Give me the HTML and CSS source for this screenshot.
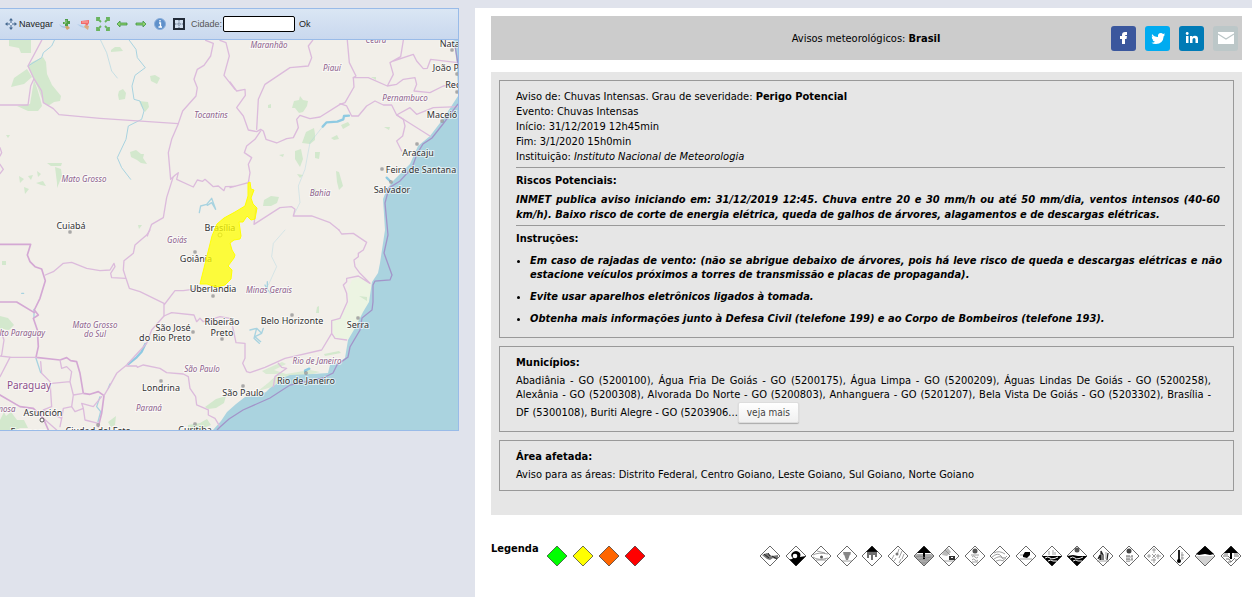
FILE: index.html
```html
<!DOCTYPE html>
<html lang="pt-BR">
<head>
<meta charset="utf-8">
<title>Avisos meteorológicos: Brasil</title>
<link rel="stylesheet" href="styles.css">
</head>
<body>
<div class="page">
  <section class="map-panel" aria-label="Mapa">
    <div class="toolbar">
      <button class="tool" type="button">
        <svg width="12" height="12" viewBox="0 0 12 12"><path d="M6 1v10M1 6h10" stroke="#46698f" stroke-width="1"/><path d="M6 0l2 2.500H4zM6 12l2-2.500H4zM0 6l2.500-2v4zM12 6L9.500 4v4z" fill="#46698f"/><rect x="5" y="5" width="2" height="2" fill="#dfe8f6"/></svg>
        <span>Navegar</span>
      </button>
      <button class="tool" type="button" aria-label="Aproximar">
        <svg width="14" height="14" viewBox="0 0 14 14"><path d="M1 7q3 3 7 2l-1 2q-4 0-6-4z" fill="#a9c6e6"/><path d="M9 8l3 3-3 2-2-3z" fill="#d3a56b"/><path d="M7 2h3v2h2v3h-2v2H7V7H5V5h2z" fill="#4f9f48"/><path d="M8 3v3H6" stroke="#9bd08c" fill="none"/></svg>
      </button>
      <button class="tool" type="button" aria-label="Afastar">
        <svg width="14" height="14" viewBox="0 0 14 14"><path d="M0 7q4 1 6 2l2 2q-4 0-8-4z" fill="#b3cdea"/><path d="M8 8l4 1-1 4-4-3z" fill="#dcab7c"/><path d="M4 4l8-1v3l-2 3-2-2-4 0z" fill="#f0696a"/><path d="M5 5h6" stroke="#ffb1aa"/></svg>
      </button>
      <button class="tool" type="button" aria-label="Extensão máxima">
        <svg width="14" height="14" viewBox="0 0 14 14"><path d="M1 4V1h3M10 1h3v3M13 10v3h-3M4 13H1v-3M1 1l4 4M13 1L9 5M13 13L9 9M1 13l4-4" stroke="#69b45f" stroke-width="1.800" fill="none"/></svg>
      </button>
      <button class="tool" type="button" aria-label="Anterior">
        <svg width="14" height="14" viewBox="0 0 14 14"><path d="M2 7l3-3v2h7v2H5v2z" fill="#8ed06e" stroke="#3f9645" stroke-width=".8"/></svg>
      </button>
      <button class="tool" type="button" aria-label="Próximo">
        <svg width="14" height="14" viewBox="0 0 14 14"><path d="M12 7L9 4v2H2v2h7v2z" fill="#8ed06e" stroke="#3f9645" stroke-width=".8"/></svg>
      </button>
      <button class="tool" type="button" aria-label="Informação">
        <svg width="14" height="14" viewBox="0 0 14 14"><circle cx="7" cy="7" r="5.500" fill="#5f90ca" stroke="#8aaedb"/><path d="M6 6h1.500v4M5.500 10H9M7 3v1.500" stroke="#fff" stroke-width="1.300" fill="none"/></svg>
      </button>
      <button class="tool" type="button" aria-label="Grade">
        <svg width="14" height="14" viewBox="0 0 14 14"><rect x="2" y="2" width="10" height="10" fill="#d3e0f0" stroke="#222b38" stroke-width="2"/><path d="M7 3v8M3 7h8" stroke="#64748c" stroke-dasharray="1.500 .8"/></svg>
      </button>
      <label class="city-label" for="city">Cidade:</label>
      <input class="city-input" id="city" type="text">
      <button class="tool" type="button">Ok</button>
    </div>
    <svg class="map" viewBox="0 40 458 390" role="img" aria-label="Mapa do Brasil com área de aviso">
      <rect x="0" y="40" width="458" height="390" fill="#f2efe9"/>
      <!-- Vegetation -->
      <g fill="#d3e8cd">
        <path d="M9 40h22v13h-10l-2-5-10-2zM28 66l4-4 11-5 3 5 1 12 5 11 9 11-1 5-6 1-6 4-5-4-5-14-5-10z"/>
        <path d="M11 87l3-9 13-9 5 8-8 7zM34 80l3 8 3 10 2 8-4 5-10 0-11-5 13-2z"/>
        <path d="M111 50l4-3 5 0 3 4-12 1zM150 76l5-1 5 3-3 6-6-3zM119 91l4-2 3 4-1 6-6 1-1-5zM139 101l9 1 1 5-4 5-4-6zM130 152l6-2 5 4 3 0-1 4 4 6-6-1-4-3-6-3z"/>
        <path d="M47 163l15 0-1 3-10 0zM19 176l5 3-4 4zM37 171l4 3-3 3zM55 167l6 2 1 7-5 12 0-5zM36 183l7-2 3 5-5-1zM24 187l5 2-4 5zM28 176l5-1-2 5zM138 225l4 0-3 4zM6 135l4 0-2 3z"/>
        <path d="M294 101l5-1 1-4 3 4 5 1-1 5-4 6-4 1-4-5-3 0zM306 132l8-4 1 6 0 6-5 4-8-1zM295 151l6-2 2 10-3 8-5-8zM331 138l6-3 2 4-5 1zM341 125l7-3 2 3-7 4zM336 171l3 1 4 14-4 4-2-8zM315 152l5 0-1 7-4-1zM264 200l7-4 8 1-2 6-6 3-8 0zM312 190l3-2 3 6-4 3zM384 127l6 0-1 3zM279 155l5-1-1 3zM268 105l3-1 0 4-3 0zM297 174l6 1-3 3zM371 77l5 0 0 3z"/>
        <path d="M0 316l8 2 6 7-5 5-9-1zM2 261l4 0 0 4-4 0zM108 422l8-6-1 9-4 2zM0 420l4-8 2 4 5-4 6 8 7 0 4 8-8 0-4 2-16 0zM205 407l11-8 10-3-2 7-8 5-8 1zM188 425l12-2 7-4 4 6-12 5-11 0z"/>
        <path d="M352 280l10-3 9 6 0 20-9 18-14 18-14 0-3-18 10-4 8-15-1-12z" fill="#ecf4e2"/>
        <path d="M262 371l20-9 4 2-12 6 12 4 24-4 10 2-18 5-16 0-14 10-14 4 10-8 10-9-12 0z" opacity=".8"/>
        <path d="M317 307l2-1 0 7-3 0zM324 354l15-3 2 2-16 3zM359 296l8 1 0 4z"/>
      </g>
      <!-- Ocean -->
      <path d="M453 40L455 49L457 66L458 96L443 119L430 136L418 146L410 164L393 181L387 189L383 199L385 230L380 263L378 273L372 282L369 302L363 312L355 328L348 340L345 358L338 363L330 365L328 373L313 374L290 375L283 378L278 383L270 388L266 392L258 395L245 397L236 404L227 412L221 421L213 430H458V40z" fill="#aad3df"/>
      <g class="river">
        <g transform="translate(0 36) scale(.3333)">
          <path d="M163 13L155 30L130 50L125 65L84 90M388 13L408 40L412 65L436 95L405 118L396 150L402 190L420 195L432 225L425 250L385 270L378 310L352 365L365 395L392 430"/>
          <path d="M302 13L320 50L335 105L352 126" opacity=".6"/>
          <path class="wide" d="M598 530L602 510L620 505L635 487L647 520L635 500L622 508"/>
        </g>
        <g transform="translate(230 36) scale(.3333)">
          <path class="lake" d="M278 272L290 259L322 257L340 250L342 240L357 239"/>
          <path d="M278 272L240 320L225 400L205 450L210 500L190 540" opacity=".4"/>
          <path class="lake" d="M470 425L480 435"/>
        </g>
        <g transform="translate(0 230) scale(.3333)">
          <path class="lake" d="M436 342L425 365L410 382L385 402"/>
          <path class="wide" d="M108 385L122 428M330 462L325 475M300 500L290 530L302 545L294 575M102 238V262M65 190h6"/>
        </g>
        <g transform="translate(230 230) scale(.3333)">
          <path class="wide" d="M60 300L80 295L95 310L75 320L92 335M80 295L72 325L88 340M95 310L100 295M105 165L112 178L122 190M112 178V155"/>
          <path class="lake" d="M238 416L225 422L228 430"/>
          <path d="M165 0L130 40L125 80L140 110L115 165" opacity=".4"/>
        </g>
      </g>
      <!-- Borders -->
      <g class="border">
        <g transform="translate(0 36) scale(.3333)">
          <path d="M125 13L84 90L102 128L125 165L130 200L160 218L177 236L300 247L535 263M0 207H84L92 150L102 128"/>
          <path d="M617 13L640 22L632 60L612 88L592 100L582 130L592 155L588 180L548 225L535 263L515 310L505 350L512 430L525 418L535 410L530 430L580 453L592 432L608 436L615 430L640 452L655 450L672 464L676 452L705 451"/>
          <path d="M660 13L678 20L688 60L672 118L705 160M519 425L500 485L490 545L455 565L442 600M0 335L5 350L0 360M0 385L10 400L0 413"/>
        </g>
        <g transform="translate(230 36) scale(.3333)">
          <path d="M0 138L20 165L45 160L46 178L20 215L40 240L55 282L80 287L92 280L100 285L108 310L140 321L170 308L190 305L205 275L200 250L210 238L240 248L270 243L330 205L345 200L372 153L370 125L378 120L358 80L352 13"/>
          <path d="M248 13L235 30L245 65L235 90L180 95L105 145L85 190L80 280M330 203L350 210L365 240L385 240L410 210L435 195L460 207L485 207L500 237L600 300"/>
          <path d="M370 125L415 125L472 150L490 115L480 80L512 62L520 13M472 150L500 145L520 130L555 125L560 145L552 165L600 170L640 150L680 145M490 75L550 55L560 75L580 98L592 97L602 70L685 80"/>
          <path d="M500 237L540 215L560 235L610 215L685 212M500 237L520 250L525 270L518 300L500 315L515 345M92 285L75 310L50 330L43 350L65 365L55 385L60 410L55 440L0 455M78 517L72 565L150 515L185 512L195 520L190 540L245 540L300 560L327 582"/>
        </g>
        <g transform="translate(0 230) scale(.3333)">
          <path class="national" d="M0 43H92L82 75L90 95L105 110L125 117L136 152L120 205L103 240L115 255L100 265L112 300L115 350L108 382L180 390L200 383L212 392L230 395L240 430L250 490L270 493L295 485L312 497L305 550L295 590M0 216H50L103 248M0 495L60 530L100 535L130 565L145 600"/>
          <path d="M136 135L160 125L190 100L215 97L260 115L300 122L330 120L342 100L345 110L332 130L335 143L378 145L388 175L420 185L492 220L492 258L455 300L440 340L380 405L350 430L328 470L312 497M450 0L440 15L405 45L400 70L372 92L370 120L378 145M492 225L525 182L550 182L600 175"/>
          <path d="M492 258L515 248L582 255L590 275L600 265L610 275L660 260L690 265M380 408L410 408L412 412L430 405L480 415L500 428L550 432L565 440L570 475L587 500L590 525L625 540L625 555L645 565L660 590"/>
          <path d="M5 375L12 330L5 310M0 378L35 382L110 382M122 395L125 430L150 455L155 530M180 390L185 415L200 410L215 425L210 455L155 460M210 455L220 495L250 490M30 382L0 440M155 530L130 540L185 565L190 535L215 530L225 545L250 535L245 520L280 530L305 500M220 495L215 530M185 565L180 590M250 535L255 570L295 580M130 565L170 600"/>
        </g>
        <g transform="translate(230 230) scale(.3333)">
          <path d="M327 0L335 12L370 10L410 37L400 60L385 70L385 80L372 90L375 110L390 130L420 160L385 138L350 145L350 155L340 165L350 190L352 215L330 265L305 272L305 310L275 360L165 385L105 412L60 428L50 425L38 400L45 385L45 340L18 338L8 290M305 310L315 325L350 330M145 400L155 412L170 415L135 440L130 470"/>
        </g>
      </g>
      <path d="M455 46L458 64M458 104L443 124L432 138L423 144L417 154L412 168L400 181L389 188L385 203L388 235L384 253L392 275L390 280L375 281L373 285L373 302L372 310L362 318L360 330L350 347L348 357L337 365L333 373L323 378L290 385L270 398L243 410L229 419L220 427L217 430" fill="none" stroke="#a294c9" stroke-width="1.300"/>
      <!-- City markers -->
      <g fill="#fff" stroke="#777" stroke-width=".8">
        <rect x="451" y="49" width="2" height="2"/><rect x="456" y="73" width="2" height="2"/><rect x="456" y="91" width="2" height="2"/><rect x="441" y="120" width="2" height="2"/><rect x="416" y="143" width="2" height="2"/><rect x="381" y="168" width="2" height="2"/><rect x="390" y="181" width="2" height="2"/><rect x="69" y="231" width="2" height="2"/><circle cx="220" cy="235" r="2"/><rect x="194" y="251" width="2" height="2"/><rect x="212" y="295" width="2" height="2"/><rect x="192" y="331" width="2" height="2"/><rect x="221" y="338" width="2" height="2"/><rect x="291" y="314" width="2" height="2"/><rect x="357" y="317" width="2" height="2"/><rect x="305" y="372" width="2" height="2"/><rect x="242" y="385" width="2" height="2"/><rect x="160" y="380" width="2" height="2"/><circle cx="42" cy="420" r="2" stroke="#333"/><rect x="194" y="423" width="2" height="2"/><rect x="97" y="424" width="2" height="2"/>
      </g>
      <g class="state">
        <text x="269" y="48">Maranhão</text><text x="332" y="71">Piauí</text><text x="376" y="43">Ceará</text><text x="405" y="101">Pernambuco</text><text x="211" y="118">Tocantins</text><text x="84" y="182">Mato Grosso</text><text x="320" y="196">Bahia</text><text x="177" y="243">Goiás</text><text x="269" y="293">Minas Gerais</text><text x="95" y="328">Mato Grosso</text><text x="95" y="337">do Sul</text><text x="20" y="336">Alto Paraguay</text><text x="202" y="372">São Paulo</text><text x="149" y="411">Paraná</text><text x="317" y="364">Rio de Janeiro</text><text x="0" y="412">Formosa</text>
      </g>
      <text class="country" x="29" y="389">Paraguay</text>
      <g class="city">
        <text x="451" y="47">Natal</text><text x="458" y="71">João Pessoa</text><text x="458" y="88">Recife</text><text x="442" y="118">Maceió</text><text x="418" y="156">Aracaju</text><text x="421" y="173">Feira de Santana</text><text x="392" y="193">Salvador</text><text x="71" y="229">Cuiabá</text><text x="220" y="231">Brasília</text><text x="196" y="262">Goiânia</text><text x="213" y="292">Uberlândia</text><text x="173" y="331">São José</text><text x="165" y="341">do Rio Preto</text><text x="222" y="325">Ribeirão</text><text x="222" y="336">Preto</text><text x="292" y="324">Belo Horizonte</text><text x="358" y="328">Serra</text><text x="306" y="384">Rio de Janeiro</text><text x="243" y="396">São Paulo</text><text x="161" y="391">Londrina</text><text x="43" y="416">Asunción</text><text x="195" y="433">Curitiba</text><text x="98" y="434">Ciudad del Este</text><text x="29" y="435">Formosa</text>
      </g>
      <!-- Warning area -->
      <path d="M248 183L250 182L251 189L254 190L251 198L253 204L257 208L255 219L251 220L247 216L243 222L239 222L241 236L240 239L234 240L230 243L232 250L235 255L234 258L228 266L232 270L231 279L228 282L225 285L216 287L207 284L200 284L212 236L217 224L224 218L235 212L245 206L248 196z" fill="#ff0" fill-opacity=".75" stroke="#ff0"/>
    </svg>
  </section>

  <main class="content">
    <header class="title-bar">
      <h1 class="title">Avisos meteorológicos: <b>Brasil</b></h1>
      <nav class="share">
        <a class="share-link facebook" href="#" aria-label="Facebook"><svg viewBox="0 0 25 25"><path d="M11 18v-5H9v-3h2V9q0-3 3-3h2v3h-1q-1 0-1 1h2l-.500 3H14v5z" fill="#fff"/></svg></a>
        <a class="share-link twitter" href="#" aria-label="Twitter"><svg viewBox="0 0 25 25"><path d="M7 8q2 3 6 3-.500-4 3-4 1 0 2 1l2-.500-1 1.500 1-.200-1.300 1.500Q18 18 11 18q-3 0-4.500-1.200 2.300 0 3.500-1.100-2-.500-2.500-2l1 0Q6.700 13 6.700 10.500l1.200.3Q6.300 9.500 7 8z" fill="#fff"/></svg></a>
        <a class="share-link linkedin" href="#" aria-label="LinkedIn"><svg viewBox="0 0 25 25"><path d="M7 10h2.500v7H7zM11 10h2.300v1q1-1.200 2.700-1.200 3 0 3 3.200v4h-2.500v-3.500q0-1.500-1.400-1.500-1.600 0-1.600 1.700V17H11z" fill="#fff"/><circle cx="8.200" cy="7.500" r="1.400" fill="#fff"/></svg></a>
        <a class="share-link email" href="#" aria-label="E-mail"><svg viewBox="0 0 25 25"><rect x="5" y="6" width="16" height="12" fill="#fff"/><path d="M5 8l8 5 8-5" fill="none" stroke="#bcc7c8" stroke-width="1.200"/></svg></a>
      </nav>
    </header>

    <div class="notice">
      <section class="card">
        <p class="facts">Aviso de: Chuvas Intensas. Grau de severidade: <b>Perigo Potencial</b><br>Evento: Chuvas Intensas<br>Início: 31/12/2019 12h45min<br>Fim: 3/1/2020 15h0min<br>Instituição: <i>Instituto Nacional de Meteorologia</i></p>
        <div class="risks">
          <h2 class="heading">Riscos Potenciais:</h2>
          <p class="strong-text">INMET publica aviso iniciando em: 31/12/2019 12:45. Chuva entre 20 e 30 mm/h ou até 50 mm/dia, ventos intensos (40-60 km/h). Baixo risco de corte de energia elétrica, queda de galhos de árvores, alagamentos e de descargas elétricas.</p>
        </div>
        <h2 class="heading">Instruções:</h2>
        <ul class="tips">
          <li>Em caso de rajadas de vento: (não se abrigue debaixo de árvores, pois há leve risco de queda e descargas elétricas e não estacione veículos próximos a torres de transmissão e placas de propaganda).</li>
          <li>Evite usar aparelhos eletrônicos ligados à tomada.</li>
          <li>Obtenha mais informações junto à Defesa Civil (telefone 199) e ao Corpo de Bombeiros (telefone 193).</li>
        </ul>
      </section>
      <section class="card">
        <h2 class="heading">Municípios:</h2>
        <p class="towns">Abadiânia - GO (5200100), Água Fria De Goiás - GO (5200175), Água Limpa - GO (5200209), Águas Lindas De Goiás - GO (5200258), Alexânia - GO (5200308), Alvorada Do Norte - GO (5200803), Anhanguera - GO (5201207), Bela Vista De Goiás - GO (5203302), Brasília - DF (5300108), Buriti Alegre - GO (5203906...<button class="more" type="button">veja mais</button></p>
      </section>
      <section class="card">
        <h2 class="heading">Área afetada:</h2>
        <p class="areas">Aviso para as áreas: Distrito Federal, Centro Goiano, Leste Goiano, Sul Goiano, Norte Goiano</p>
      </section>
    </div>

    <footer class="legend">
      <b class="legend-title">Legenda</b>
      <div class="levels">
        <svg class="sign" viewBox="0 0 22 22"><path class="level" d="M11 1l10 10-10 10L1 11z" fill="#0f0"/></svg>
        <svg class="sign" viewBox="0 0 22 22"><path class="level" d="M11 1l10 10-10 10L1 11z" fill="#ff0"/></svg>
        <svg class="sign" viewBox="0 0 22 22"><path class="level" d="M11 1l10 10-10 10L1 11z" fill="#f60"/></svg>
        <svg class="sign" viewBox="0 0 22 22"><path class="level" d="M11 1l10 10-10 10L1 11z" fill="#f00"/></svg>
      </div>
      <div class="events">
        <svg class="sign" viewBox="0 0 22 22"><path class="frame" d="M11 1l10 10-10 10L1 11z"/><path d="M3 10l5-2 5 3 6-1 0 3-3 1-2-1-3 2-3-1z" fill="#777"/><path d="M5 9l5 4M13 11l5 3M9 8l2 3" stroke="#222"/></svg>
        <svg class="sign" viewBox="0 0 22 22"><path class="frame" d="M11 1l10 10-10 10L1 11z"/><path d="M21 11L11 21l-7-7q3 1 4-1-3-2-1-5 4-4 8 0 1 2 0 4z"/><circle cx="10" cy="11" r="2.300" fill="#fff"/></svg>
        <svg class="sign" viewBox="0 0 22 22"><path class="frame" d="M11 1l10 10-10 10L1 11z"/><path class="fine" d="M3 10q5-3 15-1M3 12q5 4 15 1M6 15h10M7 6l8 2"/><circle cx="11.500" cy="12" r="1.500" fill="#555"/></svg>
        <svg class="sign" viewBox="0 0 22 22"><path class="frame" d="M11 1l10 10-10 10L1 11z"/><path d="M7 7h8l-2 5-1 3h-2l-1-3z" fill="#888"/><path class="fine" d="M6 16h10M7 9h8M9 12h4"/></svg>
        <svg class="sign" viewBox="0 0 22 22"><path class="frame" d="M11 1l10 10-10 10L1 11z"/><path d="M11 1l6 6H5z"/><path d="M7 6v7M11 6v9M15 6v6M9 6v4M13 6v4" stroke="#222" stroke-width="1.300"/></svg>
        <svg class="sign" viewBox="0 0 22 22"><path class="frame" d="M11 1l10 10-10 10L1 11z"/><path class="fine" d="M12 4l-2 6M15 6l-3 7M7 10l-2 4M9 13l-2 3M14 14l-2 4M17 9l-2 5"/><circle cx="10" cy="9" r="1.500" fill="#777"/></svg>
        <svg class="sign" viewBox="0 0 22 22"><path d="M4 9h14l3 2-10 10L1 11z" fill="#aaa"/><path class="frame" d="M11 1l10 10-10 10L1 11z"/><path d="M11 1l7 7H4z"/><path d="M11 7v7" stroke="#000" stroke-width="2"/><path class="fine" d="M3 12q4-2 7 0t8 0M5 15q4-2 7 0h4M8 18h6"/></svg>
        <svg class="sign" viewBox="0 0 22 22"><path class="frame" d="M11 1l10 10-10 10L1 11z"/><path d="M5 7l5-4 3 4-4 4-5-1z" fill="#bbb"/><path d="M11 11h6v4h-6z" fill="#333"/><path d="M13 12h2v1h-2z" fill="#fff"/><path class="fine" d="M6 16h10M7 5l5 5"/></svg>
        <svg class="sign" viewBox="0 0 22 22"><path class="frame" d="M11 1l10 10-10 10L1 11z"/><circle cx="11" cy="6" r="2.500" fill="#555"/><path class="fine" d="M7 10h8M8 12q1.500-2 3 0t3 0M8 15q1.500-2 3 0t3 0M8 17h6"/></svg>
        <svg class="sign" viewBox="0 0 22 22"><path class="frame" d="M11 1l10 10-10 10L1 11z"/><path class="fine" d="M5 8q5-3 11 1M3 12q6-5 9-1t6 0M5 14q6-4 8-1t4 0M7 16q4-2 8 0"/></svg>
        <svg class="sign" viewBox="0 0 22 22"><path class="frame" d="M11 1l10 10-10 10L1 11z"/><path d="M8 10l2-3 5 0 0 3-3 3-4-1z"/><path class="fine" d="M5 14h12M5 10h3"/></svg>
        <svg class="sign" viewBox="0 0 22 22"><path class="frame" d="M11 1l10 10-10 10L1 11z"/><path d="M1 11h20L11 21z"/><path d="M4 13q3-2 5 0t8-1M7 16q3-2 5 0h4" stroke="#fff" fill="none"/><path class="fine" d="M8 6v4M12 5v5M14 7v3"/></svg>
        <svg class="sign" viewBox="0 0 22 22"><path class="frame" d="M11 1l10 10-10 10L1 11z"/><circle cx="11" cy="5" r="2.500" fill="#555"/><path d="M1 11l6-1 5 1 9 0-10 10z"/><path d="M4 13q3-2 5 0t8-1M7 16q3-2 5 0h4" stroke="#eee" fill="none"/></svg>
        <svg class="sign" viewBox="0 0 22 22"><path class="frame" d="M11 1l10 10-10 10L1 11z"/><path d="M6 14l2-4v5M9 15V6l2 4v5M15 15l1-7" stroke="#222" stroke-width="1.200" fill="none"/><path class="fine" d="M5 16h12M14 7v7"/></svg>
        <svg class="sign" viewBox="0 0 22 22"><path class="frame" d="M11 1l10 10-10 10L1 11z"/><circle cx="11" cy="6" r="2.500" fill="#444"/><path d="M9 10v7M11 10v7M14 10v6" stroke="#888" stroke-width="1.300" stroke-dasharray="2 1"/><path class="fine" d="M8 12h7M8 15h7"/></svg>
        <svg class="sign" viewBox="0 0 22 22"><path class="frame" d="M11 1l10 10-10 10L1 11z"/><path class="fine" d="M11 3v5M9 5h4M6 9v4M4 11h4M15 9v5M13 11h5M11 13v5M8 15h5M9 9l4 4M13 9l-4 4"/></svg>
        <svg class="sign" viewBox="0 0 22 22"><path class="frame" d="M11 1l10 10-10 10L1 11z"/><path d="M10 5v11" stroke="#222" stroke-width="2"/><circle cx="10" cy="16" r="2"/><path class="fine" d="M13 7v8M12 10h3M12 13h3"/></svg>
        <svg class="sign" viewBox="0 0 22 22"><path d="M1 11h20L11 21z" fill="#d2d2d2"/><path class="frame" d="M11 1l10 10-10 10L1 11z"/><path d="M11 1l9 8-4 1-5-1-6 1-3-1z"/></svg>
        <svg class="sign" viewBox="0 0 22 22"><path class="frame" d="M11 1l10 10-10 10L1 11z"/><path d="M11 1l7 7H4z"/><path d="M11 6v8" stroke="#000" stroke-width="2"/><path d="M3 11h5l2 2M14 11h5M6 14h3l2 3 4-4M8 17h3M4 9h4M14 9h4M15 15h2" stroke="#777" fill="none"/></svg>
      </div>
    </footer>
  </main>
</div>
</body>
</html>
```
FILE: styles.css
```css
* { box-sizing: border-box; }
body {
  margin: 0;
  background: #e0e3ec;
  color: #000;
  font: 11px/15px "DejaVu Sans Condensed", "DejaVu Sans", sans-serif;
}
h1, h2, p, ul { margin: 0; }
svg { display: block; }
button { font: inherit; color: inherit; }

.page {
  display: grid;
  grid-template-columns: minmax(0, 475fr) minmax(0, 777fr);
  min-height: 100vh;
  padding-top: 8px;
}

/* Map */
.map-panel {
  align-self: start;
  margin-right: 16px;
  border: 1px solid #99bbe8;
  border-left: 0;
}
.toolbar {
  display: flex;
  align-items: center;
  height: 31px;
  padding-left: 5px;
  gap: 5px;
  border-bottom: 1px solid #99bbe8;
  background: linear-gradient(#dae6f4, #c9d8ee);
  font: 9px/14px "Liberation Sans", Arial, sans-serif;
  color: #222;
}
.tool {
  display: flex;
  align-items: center;
  gap: 2px;
  padding: 0;
  border: 0;
  background: none;
}
.city-label { color: #555; }
.city-input {
  width: 72px;
  height: 16px;
  margin: 0 -1px 0 -4px;
  border: 1px solid #000;
  border-radius: 2px;
  background: #fff;
  font: inherit;
}
.map { width: 100%; height: auto; }
.map text {
  font-family: "Noto Sans", sans-serif;
  font-size: 9px;
  text-anchor: middle;
  paint-order: stroke;
  stroke: #fff;
  stroke-opacity: .6;
  stroke-width: 2px;
}
.map .city text { fill: #333; }
.map .state text { fill: #8d618b; font-size: 8px; font-style: italic; }
.map .country { fill: #8d4f8b; font-size: 10px; }
.river, .border { fill: none; stroke-linecap: round; stroke-linejoin: round; }
.river { stroke: #a8d3e0; stroke-width: 3; }
.river .wide { stroke-width: 4; }
.river .lake { stroke: #8ecae2; stroke-width: 7; }
.border { stroke: #dcbbdc; stroke-width: 4; }
.border .national { stroke: #d4a8d4; stroke-width: 5; }

/* Right column */
.content {
  padding: 8px 10px 16px 16px;
  background: #fff;
}
.title-bar {
  display: grid;
  grid-template-columns: 1fr auto 1fr;
  align-items: center;
  height: 44px;
  padding: 1px 4px 0 3px;
  background: #ccc;
}
.title { grid-column: 2; font-size: 11px; font-weight: normal; }
.share { display: flex; justify-content: flex-end; gap: 9px; }
.share-link { width: 25px; height: 25px; border-radius: 3px; }
.facebook { background: #3b579d; }
.twitter { background: #00abf0; }
.linkedin { background: #007bb6; }
.email { background: #bcc7c8; }

.notice {
  display: grid;
  gap: 8px;
  margin-top: 12px;
  padding: 8px 8px 24px;
  background: #e6e6e6;
}
.card { padding: 8px 8px 8px 16px; border: 1px solid #999; }
.heading { font-size: 11px; line-height: 15px; }
.risks {
  margin: 3px 0 5px;
  padding: 5px 0 3px;
  border: solid #999;
  border-width: 1px 0;
}
.strong-text {
  margin: 4px 5px 0 0;
  font-weight: bold;
  font-style: italic;
  text-align: justify;
}
.tips {
  display: grid;
  gap: 8px;
  margin: 8px 3px 3px 0;
  padding-left: 14px;
  font-weight: bold;
  font-style: italic;
  line-height: 14px;
  text-align: justify;
}
.towns { margin: 4px 14px 0 0; line-height: 14px; text-align: justify; }
.areas { margin-top: 3px; }
.more {
  padding: 2px 8px;
  border: 1px solid #ddd;
  border-radius: 2px;
  background: linear-gradient(#fff, #f0f0f0);
  box-shadow: 0 1px 1px #aaa;
  font-size: 10px;
  line-height: 15px;
  color: #444;
}

.legend { display: flex; gap: 7px; margin-top: 26px; }
.levels { display: flex; gap: 4px; padding-top: 4px; }
.events {
  display: flex;
  flex-basis: 483px;
  justify-content: space-between;
  margin-left: auto;
  padding-top: 4px;
}
.sign { width: 22px; height: 22px; }
.level { stroke: #333; stroke-width: .7; }
.frame { fill: none; stroke: #444; stroke-width: .8; }
.fine { fill: none; stroke: #888; stroke-width: .8; }
```
